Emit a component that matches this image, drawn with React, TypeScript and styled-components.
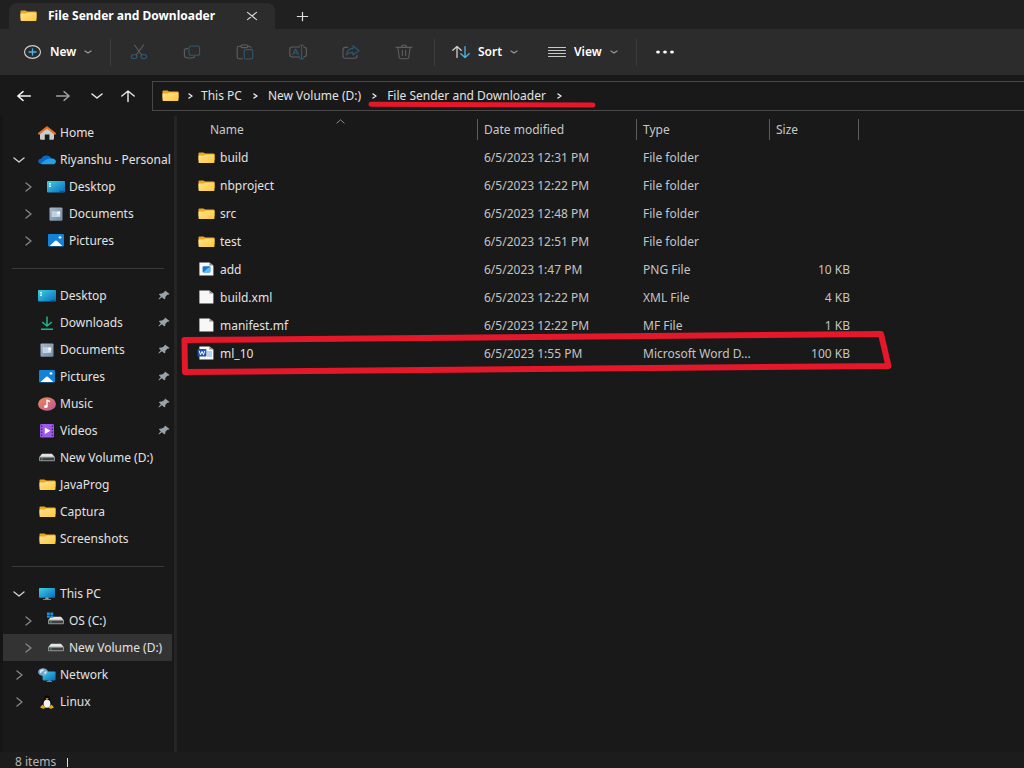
import React from "react";
import styled, { createGlobalStyle } from "styled-components";

const GlobalStyle = createGlobalStyle`
  *, *::before, *::after { box-sizing: border-box; }
  body { margin: 0; background: #191919; }
  button { font: inherit; color: inherit; background: none; border: 0; padding: 0; margin: 0; cursor: pointer; }
  a { color: inherit; text-decoration: none; }
  ul, ol { list-style: none; margin: 0; padding: 0; }
  svg { display: block; flex: none; overflow: visible; }
`;

const Explorer = styled.div`
  display: flex;
  flex-direction: column;
  height: 100vh;
  overflow: hidden;
  background: #191919;
  color: #e2e2e2;
  font-family: "Noto Sans", "Open Sans", sans-serif;
  font-size: 12px;
  line-height: 16px;
`;

/* Title bar */

const TitleBar = styled.header`
  display: flex;
  flex: none;
  align-items: flex-end;
  height: 29px;
  padding-left: 9px;
  background: #202020;
`;

const Tab = styled.div`
  display: flex;
  align-items: center;
  width: 266px;
  height: 26px;
  padding: 0 16px 0 11px;
  gap: 11px;
  border-radius: 8px 8px 0 0;
  background: #2c2c2c;
`;

const TabTitle = styled.span`
  flex: 1;
  color: #fff;
  font-weight: 700;
  white-space: nowrap;
`;

const TabButton = styled.button`
  display: grid;
  place-items: center;
  width: 14px;
  height: 26px;
`;

const NewTabButton = styled(TabButton)`
  margin-left: 20px;
`;

/* Command bar */

const CommandBar = styled.div`
  display: flex;
  flex: none;
  align-items: center;
  height: 46px;
  padding-left: 24px;
  background: #2c2c2c;
`;

const MenuButton = styled.button<{ $width: number }>`
  display: flex;
  align-items: center;
  gap: 8px;
  width: ${(p) => p.$width}px;
  height: 28px;
  color: #fff;
  font-weight: 600;
  & > svg:last-child { margin-left: -2px; }
`;

const IconButton = styled.button`
  display: grid;
  place-items: center;
  width: 53px;
  height: 28px;
`;

const BarDivider = styled.span<{ $before: number; $after: number }>`
  width: 1px;
  height: 27px;
  margin: 0 ${(p) => p.$after}px 0 ${(p) => p.$before}px;
  background: #3c3c3c;
`;

/* Address row */

const AddressRow = styled.div`
  display: flex;
  flex: none;
  align-items: center;
  height: 41px;
  padding: 1px 0 0 7px;
`;

const NavButton = styled.button<{ $width: number }>`
  display: grid;
  place-items: center;
  width: ${(p) => p.$width}px;
  height: 28px;
`;

const AddressBox = styled.nav`
  display: flex;
  flex: 1;
  align-items: center;
  height: 30px;
  margin-left: 7px;
  padding-left: 9px;
  border: 1px solid #484848;
  border-right: 0;
`;

const Crumbs = styled.ol`
  display: flex;
  align-items: center;
`;

const Crumb = styled.li`
  position: relative;
  display: flex;
  align-items: center;
  white-space: nowrap;
`;

const CrumbArrow = styled.span<{ $width: number }>`
  display: grid;
  place-items: center;
  width: ${(p) => p.$width}px;
`;

const Underline = styled.svg`
  position: absolute;
  left: -20px;
  top: 12px;
`;

/* Body */

const Body = styled.div`
  display: flex;
  flex: 1;
  min-height: 0;
`;

const Sidebar = styled.nav`
  flex: none;
  width: 177px;
  padding: 3px 2px 0 0;
  border-left: 3px solid #151515;
  border-right: 3px solid #252525;
  overflow: hidden;
`;

const Separator = styled.hr`
  height: 1px;
  margin: 14px 8px 13px 9px;
  border: 0;
  background: #3a3a3a;
`;

const TreeRow = styled.li<{ $level: number; $selected?: boolean }>`
  display: flex;
  align-items: center;
  height: 27px;
  padding: 0 2px 0 ${(p) => 7 + p.$level * 9}px;
  background: ${(p) => (p.$selected ? "#333333" : "transparent")};
`;

const Expander = styled.button`
  display: grid;
  place-items: center;
  width: 18px;
  height: 27px;
`;

const ExpanderSpace = styled.span`
  width: 18px;
`;

const TreeLink = styled.a`
  display: flex;
  flex: 1;
  align-items: center;
  gap: 4px;
  min-width: 0;
  margin-left: 10px;
  white-space: nowrap;
`;

const IconSlot = styled.span`
  display: grid;
  flex: none;
  place-items: center;
  width: 18px;
`;

/* File list */

const Files = styled.main`
  flex: 1;
  min-width: 0;
`;

const FileTable = styled.table`
  width: 100%;
  table-layout: fixed;
  border-collapse: collapse;
`;

const Col = styled.col<{ $width?: number }>`
  width: ${(p) => (p.$width ? `${p.$width}px` : "auto")};
`;

const HeadCell = styled.th<{ $inset: number }>`
  position: relative;
  height: 27px;
  padding: 0 0 0 ${(p) => p.$inset}px;
  color: #c8c8c8;
  font-weight: 400;
  text-align: left;
  &::after {
    content: "";
    position: absolute;
    top: 3px;
    right: 0;
    width: 1px;
    height: 21px;
    background: #5c5c5c;
  }
`;

const SortMark = styled.svg`
  position: absolute;
  top: 3px;
  left: 159px;
`;

const Cell = styled.td<{ $end?: boolean }>`
  height: 28px;
  padding: ${(p) => (p.$end ? "2px 9px 0 0" : "2px 0 0 6px")};
  color: #c4c4c4;
  text-align: ${(p) => (p.$end ? "right" : "left")};
  white-space: nowrap;
`;

const NameCell = styled(Cell)`
  position: relative;
  padding-left: 21px;
  color: #e2e2e2;
`;

const FileLink = styled.a`
  display: flex;
  align-items: center;
  gap: 5px;
`;

const Highlight = styled.svg`
  position: absolute;
  left: 4px;
  top: -8px;
  pointer-events: none;
`;

const StatusBar = styled.footer`
  display: flex;
  flex: none;
  gap: 11px;
  height: 16px;
  padding-left: 15px;
  background: #1c1c1c;
  color: #b4b4b4;
  line-height: 20px;
`;

const StatusMark = styled.span`
  width: 1px;
  height: 9px;
  margin-top: 6px;
  background: #e0e0e0;
`;

/* Icons */

const FolderIcon = () => (
  <svg width="17" height="12" viewBox="0 0 17 12" aria-hidden="true">
    <defs>
      <linearGradient id="folder" x1="0" y1="0" x2="1" y2="1">
        <stop offset="0" stopColor="#ffe394" />
        <stop offset="1" stopColor="#ffc937" />
      </linearGradient>
    </defs>
    <path d="M0.5 1.3Q0.5 0.6 1.5 0.6H5.4L7.2 1.6H15.6Q16.5 1.6 16.5 2.6V8H0.5Z" fill="#f0a61a" />
    <path d="M0.5 3.6H5.6L7.4 2.4H16.5V10Q16.5 11 15.5 11H1.5Q0.5 11 0.5 10Z" fill="url(#folder)" />
  </svg>
);

const Chevron = ({ dir, color = "#9a9a9a", size = 4, weight = 1.2 }: { dir: "down" | "right" | "up"; color?: string; size?: number; weight?: number }) => {
  const s = size;
  const h = s - 1;
  const d = {
    down: `M${6 - s} ${6 - h / 2}L6 ${6 + h / 2}L${6 + s} ${6 - h / 2}`,
    up: `M${6 - s} ${6 + h / 2}L6 ${6 - h / 2}L${6 + s} ${6 + h / 2}`,
    right: `M${6 - h / 2} ${6 - h}L${6 + h / 2 + 1} 6L${6 - h / 2} ${6 + h}`,
  }[dir];
  return (
    <svg width="12" height="12" viewBox="0 0 12 12" fill="none" stroke={color} strokeWidth={weight} strokeLinecap="round" strokeLinejoin="round" aria-hidden="true">
      <path d={d} />
    </svg>
  );
};

const Stroke = ({ w = 18, h = 16, color = "#5e5e5e", weight = 1.1, children }: { w?: number; h?: number; color?: string; weight?: number; children: React.ReactNode }) => (
  <svg width={w} height={h} viewBox={`0 0 ${w} ${h}`} fill="none" stroke={color} strokeWidth={weight} strokeLinecap="round" strokeLinejoin="round" aria-hidden="true">
    {children}
  </svg>
);

const dimBlue = "#2d5a73";

const NewIcon = () => (
  <Stroke color="#d0d0d0">
    <ellipse cx="8.5" cy="8" rx="8" ry="6.4" />
    <path d="M8.5 5V11M5 8H12" stroke="#4cb4ea" strokeWidth="1.3" />
  </Stroke>
);
const CutIcon = () => (
  <Stroke>
    <path d="M4.5 1L11.6 10.8M13.5 1L6.4 10.8" />
    <ellipse cx="4.2" cy="12.6" rx="2.9" ry="2.1" stroke={dimBlue} />
    <ellipse cx="13.8" cy="12.6" rx="2.9" ry="2.1" stroke={dimBlue} />
  </Stroke>
);
const CopyIcon = () => (
  <Stroke>
    <path d="M4.5 4.6H3.4Q1.4 4.8 1.4 6.6V11Q1.4 14 5 14H9Q11.4 14 11.6 12.4" />
    <rect x="6" y="2" width="10.6" height="9.2" rx="2" stroke={dimBlue} />
  </Stroke>
);
const PasteIcon = () => (
  <Stroke>
    <path d="M5 2.3H3Q1.2 2.3 1.2 4V13Q1.2 14.8 3 14.8H6.4M12 2.3H13.2Q15 2.3 15 4" />
    <rect x="5" y="1" width="7" height="2.6" rx="1.2" />
    <rect x="8.2" y="5.6" width="8.6" height="9.4" rx="1.6" stroke={dimBlue} />
  </Stroke>
);
const RenameIcon = () => (
  <Stroke>
    <path d="M10.6 3H3.2Q0.8 3 0.8 5.2V10.8Q0.8 13 3.2 13H10.6M14.6 3Q17.4 3.2 17.4 5.4V10.6Q17.4 12.8 14.6 13" />
    <path d="M3.6 10.8L6.6 5L9.6 10.8M4.6 9H8.6M12.6 1.6V14.4M11 1.4H14.2M11 14.6H14.2" stroke={dimBlue} />
  </Stroke>
);
const ShareIcon = () => (
  <Stroke>
    <path d="M5.4 3.4H3.4Q1 3.4 1 5.6V12Q1 14.2 3.4 14.2H12.6Q15 14.2 15 12V11.4" />
    <path d="M11 1.8L17 6.6L11 11V8.4Q7 8.2 4.4 11Q5 5 11 4.4Z" stroke={dimBlue} />
  </Stroke>
);
const TrashIcon = () => (
  <Stroke>
    <path d="M1.2 3.4H16.8M2.8 3.4L4.2 13Q4.4 14.8 6.2 14.8H11.8Q13.6 14.8 13.8 13L15.2 3.4M6.4 3.2Q6.6 1 9 1Q11.4 1 11.6 3.2M7.4 6.4V11.4M10.6 6.4V11.4" />
  </Stroke>
);
const SortIcon = () => (
  <Stroke color="#d0d0d0" weight={1.3}>
    <path d="M5 13.4V2.8M0.8 6.2L5 2.4L9.2 6.2" />
    <path d="M13 2.6V13.2M8.8 9.8L13 13.6L17.2 9.8" stroke="#4cb4ea" />
  </Stroke>
);
const ViewIcon = () => (
  <Stroke color="#c8c8c8" weight={1}>
    <path d="M0.5 3.5H17.5M0.5 6.5H17.5M0.5 9.5H17.5M0.5 12.5H17.5" />
  </Stroke>
);
const MoreIcon = () => (
  <svg width="18" height="4" viewBox="0 0 18 4" fill="#fff" aria-hidden="true">
    <ellipse cx="2" cy="2" rx="1.9" ry="1.5" />
    <ellipse cx="9" cy="2" rx="1.9" ry="1.5" />
    <ellipse cx="16" cy="2" rx="1.9" ry="1.5" />
  </svg>
);

const HomeIcon = () => (
  <svg width="18" height="14" viewBox="0 0 18 14" aria-hidden="true">
    <path d="M2 6.4L9 1L16 6.4V12.6Q16 13.8 14.8 13.8H11.4V8.6H6.8V13.8H3.2Q2 13.8 2 12.6Z" fill="#c9cbcd" />
    <path d="M1 7.6L9 1.4L17 7.6" fill="none" stroke="#e8712a" strokeWidth="2" strokeLinecap="round" strokeLinejoin="round" />
  </svg>
);
const CloudIcon = () => (
  <svg width="18" height="10" viewBox="0 0 18 10" aria-hidden="true">
    <path d="M4 9Q0 8.6 0.2 6Q0.6 3.6 3.4 3.4Q5 0.4 8.6 0.5Q12 0.6 13.2 3.4Q17.6 3.6 17.8 6.4Q17.6 9 14.4 9Z" fill="#0a68c4" />
    <path d="M3 8.8Q7.6 3.4 13.2 3.4Q17.6 3.6 17.8 6.4Q17.6 9.2 14.4 9.2H4Z" fill="#259ee8" />
  </svg>
);
const DesktopIcon = () => (
  <svg width="18" height="12" viewBox="0 0 18 12" aria-hidden="true">
    <defs>
      <linearGradient id="desk" x1="0" y1="0" x2="1" y2="1">
        <stop offset="0" stopColor="#3bd2e4" />
        <stop offset="1" stopColor="#0b69bd" />
      </linearGradient>
    </defs>
    <rect width="18" height="11.6" rx="1" fill="url(#desk)" />
    <path d="M2 2H4V3.4H2ZM2 4.6H4V6H2Z" fill="#e6ffff" />
    <path d="M13 10H14.4V11H13ZM15.4 10H16.6V11H15.4Z" fill="#0a3f78" />
  </svg>
);
const DownloadIcon = () => (
  <svg width="18" height="14" viewBox="0 0 18 14" fill="none" stroke="#1fb68c" strokeWidth="1.5" aria-hidden="true">
    <path d="M9 0.5V9.6M4.2 6L9 10L13.8 6M3 13.2H15" />
  </svg>
);
const DocumentIcon = () => (
  <svg width="14" height="14" viewBox="0 0 14 14" aria-hidden="true">
    <defs>
      <linearGradient id="doc" x1="0" y1="0" x2="1" y2="1">
        <stop offset="0" stopColor="#a9bacd" />
        <stop offset="1" stopColor="#70899f" />
      </linearGradient>
    </defs>
    <rect x="0.5" y="0.4" width="13" height="13.4" rx="1" fill="url(#doc)" />
    <rect x="2.8" y="4.4" width="8.4" height="5.4" fill="#d3dfeb" />
    <path d="M3.4 6H7.6M3.4 8H7.6" stroke="#a6b7c9" strokeWidth="0.8" />
    <rect x="8.4" y="4.6" width="2.6" height="2.2" fill="#ffffff" />
  </svg>
);
const PictureIcon = () => (
  <svg width="16" height="13" viewBox="0 0 16 13" aria-hidden="true">
    <rect width="16" height="12.6" rx="1" fill="#1282d8" />
    <path d="M1.6 12L7.2 6.8Q8 6.2 8.8 6.8L14.4 12Z" fill="#fff" />
    <ellipse cx="12" cy="3.4" rx="1.4" ry="1.2" fill="#fff" />
  </svg>
);
const MusicIcon = () => (
  <svg width="18" height="14" viewBox="0 0 18 14" aria-hidden="true">
    <defs>
      <linearGradient id="music" x1="0" y1="0" x2="1" y2="1">
        <stop offset="0" stopColor="#f08a55" />
        <stop offset="1" stopColor="#b5569a" />
      </linearGradient>
    </defs>
    <ellipse cx="9" cy="7" rx="9" ry="6.8" fill="url(#music)" />
    <ellipse cx="7.8" cy="9.6" rx="1.8" ry="1.5" fill="#fff" />
    <path d="M9 9.6V3.2L12 4.6" fill="none" stroke="#fff" strokeWidth="1.3" />
  </svg>
);
const VideoIcon = () => (
  <svg width="14" height="14" viewBox="0 0 14 14" aria-hidden="true">
    <rect width="14" height="13.6" rx="1.4" fill="#9a5be6" />
    <path d="M1.6 1.6V13M12.4 1.6V13" stroke="#4f1f99" strokeWidth="1.4" strokeDasharray="1.4 1.6" />
    <path d="M4.8 3.6L10.4 6.8L4.8 10Z" fill="#fff" />
  </svg>
);
const DriveIcon = ({ windows = false }: { windows?: boolean }) => (
  <svg width="18" height="9" viewBox="0 0 18 9" aria-hidden="true">
    <path d="M4 0.8H14L17 4.4H1Z" fill="#e4e4e4" />
    <rect x="1" y="3.8" width="16" height="4.4" rx="1" fill="#8d9092" />
    <rect x="2" y="4.8" width="14" height="2.4" fill="#3e4143" />
    <path d="M3 5.4H4.6V6.6H3Z" fill="#3fc257" />
    {windows && <path d="M0 -3.4H2.8V-1H0ZM3.4 -3.4H6.2V-1H3.4ZM0 -0.4H2.8V1.8H0ZM3.4 -0.4H6.2V1.8H3.4Z" fill="#1d93e3" />}
  </svg>
);
const MonitorIcon = () => (
  <svg width="16" height="12" viewBox="0 0 16 12" aria-hidden="true">
    <path d="M6.4 9H9.6V11H12V11.8H4V11H6.4Z" fill="#9aa8b4" />
    <rect width="16" height="9.8" rx="0.8" fill="url(#desk)" />
  </svg>
);
const NetworkIcon = () => (
  <svg width="18" height="14" viewBox="0 0 18 14" aria-hidden="true">
    <path d="M10.6 12H12.4V13H14V13.8H8.6V13H10.6Z" fill="#9aa8b4" />
    <rect x="4.6" y="3.6" width="13" height="8.8" rx="0.8" fill="url(#desk)" />
    <ellipse cx="5" cy="4" rx="4.9" ry="3.8" fill="#6ea9cf" />
    <path d="M1.8 2.8Q3.6 0.6 6 1.4Q5.6 3.4 3.8 3.6Q3.4 5.4 2 5ZM6.4 3.8L8.8 3.2Q8.8 5.4 6.6 6.4Z" fill="#d6edf7" />
  </svg>
);
const LinuxIcon = () => (
  <svg width="16" height="14" viewBox="0 0 16 14" aria-hidden="true">
    <path d="M8 0.4Q11 0.4 10.8 3.4Q11 5 12.6 7.4Q14 10.4 12.4 12.4H3.6Q2 10.4 3.6 7.2Q5 5 5.2 3.4Q5 0.4 8 0.4Z" fill="#070707" />
    <ellipse cx="8" cy="8.8" rx="3.4" ry="4" fill="#f4f4f4" />
    <path d="M6.4 3.2H9.6L8 5Z" fill="#f0b41c" />
    <path d="M1 12.6L3.4 9.4L6.8 12.6Q5 14.2 3.4 13.4ZM15 12.6L12.6 9.4L9.2 12.6Q11 14.2 12.6 13.4Z" fill="#e8a90e" />
  </svg>
);
const PinIcon = () => (
  <svg width="12" height="12" viewBox="0 0 12 12" aria-hidden="true">
    <path d="M7 0.4L11.6 4L10.2 4.8L9.4 4.8L7.4 6.8L7.2 9L6.2 9.2L4 7.2L0.8 9.4L0.4 9L2.8 6.2L1 4.6L1.4 3.8L4 3.6L6.4 2Z" fill="#98a3ab" />
  </svg>
);

const Page = ({ children }: { children?: React.ReactNode }) => (
  <svg width="17" height="16" viewBox="0 0 17 16" aria-hidden="true">
    <path d="M1.4 0.4H11.4L15.4 3.6V13.6H1.4Z" fill="#f7f7f7" />
    <path d="M11.4 0.4V3.6H15.4Z" fill="#8e8e8e" />
    {children}
  </svg>
);
const PngIcon = () => (
  <Page>
    <rect x="4.6" y="4.2" width="7.8" height="6.4" rx="1" fill="#1674d4" />
    <path d="M5 10.4L9.4 6.6L12 5V9.6Q12 10.4 11 10.4Z" fill="#56c0f4" />
  </Page>
);
const WordIcon = () => (
  <Page>
    <path d="M9 6H14M9 8H14M9 10H14" stroke="#7fb0e6" strokeWidth="1.1" />
    <rect x="-0.4" y="3" width="8.8" height="7.6" rx="0.8" fill="#1c56b4" />
    <path d="M1.2 4.8L2.5 8.8L4 5.4L5.5 8.8L6.8 4.8" fill="none" stroke="#fff" strokeWidth="1" />
  </Page>
);

/* Data */

type Node = { name: string; icon: React.ReactNode; level?: number; state?: "open" | "closed"; pinned?: boolean; selected?: boolean };

const groups: Node[][] = [
  [
    { name: "Home", icon: <HomeIcon /> },
    { name: "Riyanshu - Personal", icon: <CloudIcon />, state: "open" },
    { name: "Desktop", icon: <DesktopIcon />, level: 1, state: "closed" },
    { name: "Documents", icon: <DocumentIcon />, level: 1, state: "closed" },
    { name: "Pictures", icon: <PictureIcon />, level: 1, state: "closed" },
  ],
  [
    { name: "Desktop", icon: <DesktopIcon />, pinned: true },
    { name: "Downloads", icon: <DownloadIcon />, pinned: true },
    { name: "Documents", icon: <DocumentIcon />, pinned: true },
    { name: "Pictures", icon: <PictureIcon />, pinned: true },
    { name: "Music", icon: <MusicIcon />, pinned: true },
    { name: "Videos", icon: <VideoIcon />, pinned: true },
    { name: "New Volume (D:)", icon: <DriveIcon /> },
    { name: "JavaProg", icon: <FolderIcon /> },
    { name: "Captura", icon: <FolderIcon /> },
    { name: "Screenshots", icon: <FolderIcon /> },
  ],
  [
    { name: "This PC", icon: <MonitorIcon />, state: "open" },
    { name: "OS (C:)", icon: <DriveIcon windows />, level: 1, state: "closed" },
    { name: "New Volume (D:)", icon: <DriveIcon />, level: 1, state: "closed", selected: true },
    { name: "Network", icon: <NetworkIcon />, state: "closed" },
    { name: "Linux", icon: <LinuxIcon />, state: "closed" },
  ],
];

const files = [
  { name: "build", icon: <FolderIcon />, date: "6/5/2023 12:31 PM", type: "File folder", size: "" },
  { name: "nbproject", icon: <FolderIcon />, date: "6/5/2023 12:22 PM", type: "File folder", size: "" },
  { name: "src", icon: <FolderIcon />, date: "6/5/2023 12:48 PM", type: "File folder", size: "" },
  { name: "test", icon: <FolderIcon />, date: "6/5/2023 12:51 PM", type: "File folder", size: "" },
  { name: "add", icon: <PngIcon />, date: "6/5/2023 1:47 PM", type: "PNG File", size: "10 KB" },
  { name: "build.xml", icon: <Page />, date: "6/5/2023 12:22 PM", type: "XML File", size: "4 KB" },
  { name: "manifest.mf", icon: <Page />, date: "6/5/2023 12:22 PM", type: "MF File", size: "1 KB" },
  { name: "ml_10", icon: <WordIcon />, date: "6/5/2023 1:55 PM", type: "Microsoft Word D...", size: "100 KB", marked: true },
];

const tools = [
  { label: "Cut", icon: <CutIcon /> },
  { label: "Copy", icon: <CopyIcon /> },
  { label: "Paste", icon: <PasteIcon /> },
  { label: "Rename", icon: <RenameIcon /> },
  { label: "Share", icon: <ShareIcon /> },
  { label: "Delete", icon: <TrashIcon /> },
];

const crumbs = ["This PC", "New Volume (D:)", "File Sender and Downloader"];

export default function App() {
  return (
    <Explorer>
      <GlobalStyle />
      <TitleBar>
        <Tab>
          <FolderIcon />
          <TabTitle>File Sender and Downloader</TabTitle>
          <TabButton aria-label="Close tab">
            <Stroke w={10} h={8} color="#e0e0e0"><path d="M0.5 0.4L9.5 7.6M9.5 0.4L0.5 7.6" /></Stroke>
          </TabButton>
        </Tab>
        <NewTabButton aria-label="New tab">
          <Stroke w={11} h={9} color="#e0e0e0" weight={1.2}><path d="M5.5 0.3V8.7M0.3 4.5H10.7" /></Stroke>
        </NewTabButton>
      </TitleBar>

      <CommandBar role="toolbar" aria-label="Commands">
        <MenuButton $width={86}><NewIcon />New<Chevron dir="down" size={3} /></MenuButton>
        <BarDivider $before={0} $after={1} />
        {tools.map((t) => (
          <IconButton key={t.label} aria-label={t.label}>{t.icon}</IconButton>
        ))}
        <BarDivider $before={4} $after={17} />
        <MenuButton $width={96}><SortIcon />Sort<Chevron dir="down" size={3} /></MenuButton>
        <MenuButton $width={88}><ViewIcon />View<Chevron dir="down" size={3} /></MenuButton>
        <BarDivider $before={0} $after={1} />
        <IconButton aria-label="See more"><MoreIcon /></IconButton>
      </CommandBar>

      <AddressRow>
        <NavButton $width={34} aria-label="Back">
          <Stroke w={14} h={10} color="#f4f4f4" weight={1.5}><path d="M13.4 5H0.8M6 0.6L0.8 5L6 9.4" /></Stroke>
        </NavButton>
        <NavButton $width={43} aria-label="Forward">
          <Stroke w={14} h={10} color="#a0a0a0" weight={1.4}><path d="M0.6 5H13.2M8 0.6L13.2 5L8 9.4" /></Stroke>
        </NavButton>
        <NavButton $width={26} aria-label="Recent locations"><Chevron dir="down" color="#e8e8e8" size={5} weight={1.6} /></NavButton>
        <NavButton $width={35} aria-label="Up">
          <Stroke w={14} h={12} color="#e0e0e0" weight={1.5}><path d="M7 11.4V1M0.8 6L7 1L13.2 6" /></Stroke>
        </NavButton>
        <AddressBox aria-label="Address">
          <FolderIcon />
          <CrumbArrow $width={22}><Chevron dir="right" color="#f0f0f0" size={3} weight={1.4} /></CrumbArrow>
          <Crumbs>
            {crumbs.map((c, i) => (
              <Crumb key={c}>
                <a href="#">{c}</a>
                <CrumbArrow $width={26}><Chevron dir="right" color="#f0f0f0" size={3} weight={1.4} /></CrumbArrow>
                {i === crumbs.length - 1 && (
                  <Underline width="230" height="8" viewBox="0 0 230 8" aria-hidden="true">
                    <path d="M4 4.3L226 5" stroke="#e5172b" strokeWidth="5" strokeLinecap="round" />
                  </Underline>
                )}
              </Crumb>
            ))}
          </Crumbs>
        </AddressBox>
      </AddressRow>

      <Body>
        <Sidebar aria-label="Folders">
          {groups.map((group, g) => (
            <React.Fragment key={g}>
              {g > 0 && <Separator />}
              <ul>
                {group.map((n) => (
                  <TreeRow key={n.name} $level={n.level ?? 0} $selected={n.selected}>
                    {n.state ? (
                      <Expander aria-label={`Toggle ${n.name}`}>
                        <Chevron
                          dir={n.state === "open" ? "down" : "right"}
                          color={n.state === "open" ? "#d0d0d0" : "#858585"}
                          size={n.state === "open" ? 5 : 5}
                          weight={1.4}
                        />
                      </Expander>
                    ) : (
                      <ExpanderSpace />
                    )}
                    <TreeLink href="#"><IconSlot>{n.icon}</IconSlot>{n.name}</TreeLink>
                    {n.pinned && <PinIcon />}
                  </TreeRow>
                ))}
              </ul>
            </React.Fragment>
          ))}
        </Sidebar>

        <Files>
          <FileTable>
            <colgroup>
              <Col $width={301} />
              <Col $width={159} />
              <Col $width={133} />
              <Col $width={89} />
              <Col />
            </colgroup>
            <thead>
              <tr>
                <HeadCell $inset={33}>
                  <button>Name</button>
                  <SortMark width="9" height="5" viewBox="0 0 9 5" fill="none" stroke="#8a8a8a" aria-hidden="true">
                    <path d="M0.5 4.4L4.5 0.8L8.5 4.4" />
                  </SortMark>
                </HeadCell>
                <HeadCell $inset={6}><button>Date modified</button></HeadCell>
                <HeadCell $inset={6}><button>Type</button></HeadCell>
                <HeadCell $inset={6}><button>Size</button></HeadCell>
              </tr>
            </thead>
            <tbody>
              {files.map((f) => (
                <tr key={f.name}>
                  <NameCell>
                    <FileLink href="#">{f.icon}{f.name}</FileLink>
                    {f.marked && (
                      <Highlight width="712" height="48" viewBox="0 0 712 48" fill="none" aria-hidden="true">
                        <path d="M3.5 9L700 3L707.5 35L4 41Z" stroke="#e5172b" strokeWidth="6" strokeLinejoin="round" />
                      </Highlight>
                    )}
                  </NameCell>
                  <Cell>{f.date}</Cell>
                  <Cell>{f.type}</Cell>
                  <Cell $end>{f.size}</Cell>
                </tr>
              ))}
            </tbody>
          </FileTable>
        </Files>
      </Body>

      <StatusBar><span>8 items</span><StatusMark /></StatusBar>
    </Explorer>
  );
}
